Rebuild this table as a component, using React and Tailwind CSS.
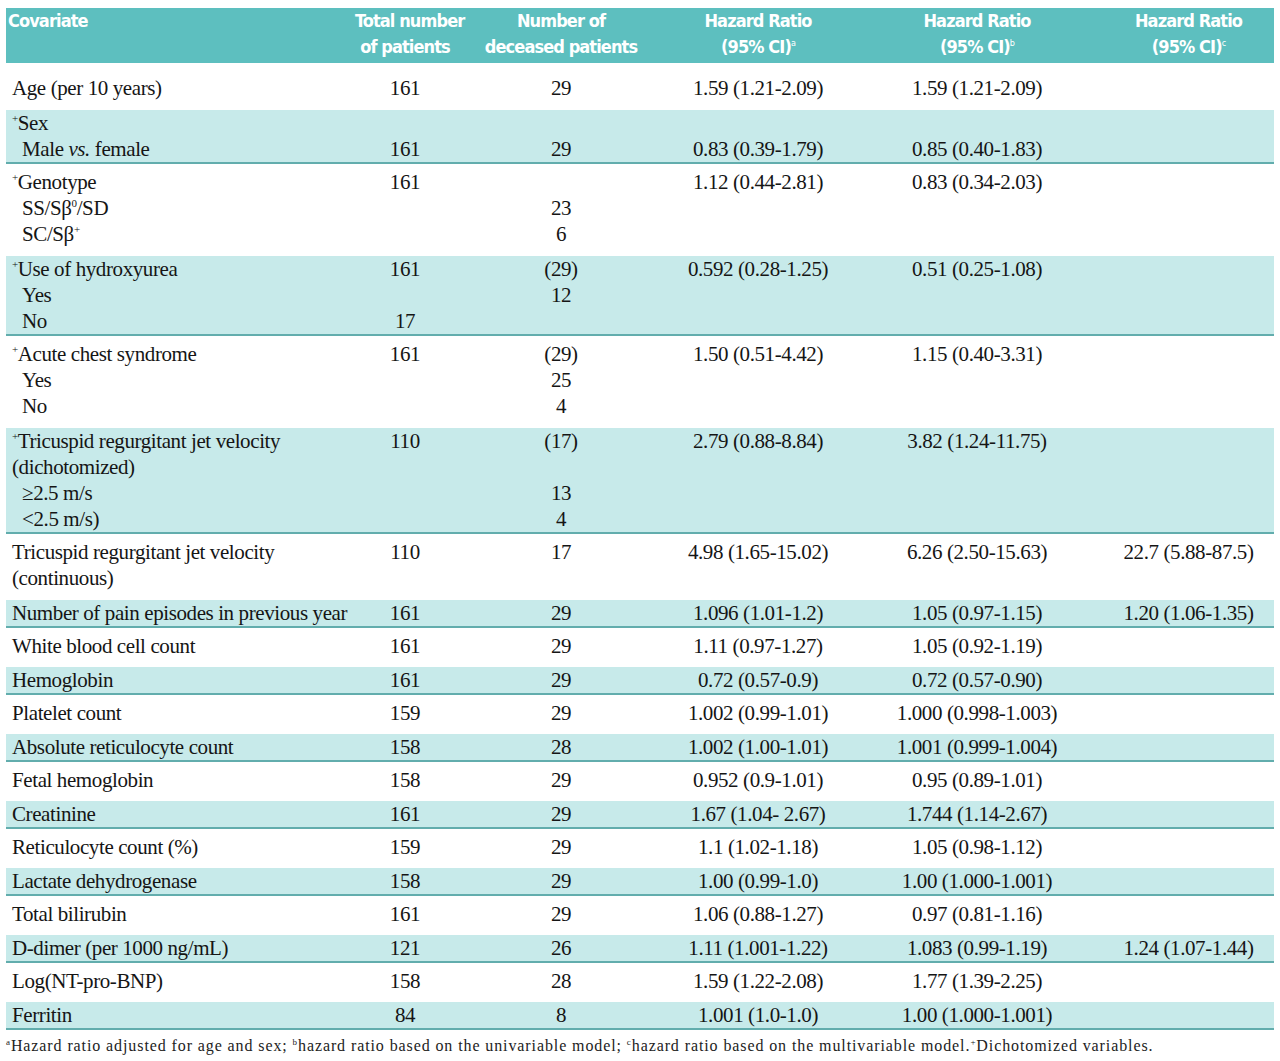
import React from 'react'

const cols = 'grid grid-cols-[349px_100px_212px_182px_256px_167px]'

const Plus = () => <span className="align-super text-[11px] leading-none">+</span>
const Ind = ({ children }) => <span className="pl-[10px]">{children}</span>

const rows = [
  { band: false, top: true, lines: [['Age (per 10 years)', '161', '29', '1.59 (1.21-2.09)', '1.59 (1.21-2.09)', '']] },
  {
    band: true,
    lines: [
      [<><Plus />Sex</>, '', '', '', '', ''],
      [<Ind>Male <i>vs.</i> female</Ind>, '161', '29', '0.83 (0.39-1.79)', '0.85 (0.40-1.83)', ''],
    ],
  },
  {
    band: false,
    lines: [
      [<><Plus />Genotype</>, '161', '', '1.12 (0.44-2.81)', '0.83 (0.34-2.03)', ''],
      [<Ind>SS/Sβ<span className="align-super text-[11px] leading-none">0</span>/SD</Ind>, '', '23', '', '', ''],
      [<Ind>SC/Sβ<span className="align-super text-[11px] leading-none">+</span></Ind>, '', '6', '', '', ''],
    ],
  },
  {
    band: true,
    lines: [
      [<><Plus />Use of hydroxyurea</>, '161', '(29)', '0.592 (0.28-1.25)', '0.51 (0.25-1.08)', ''],
      [<Ind>Yes</Ind>, '', '12', '', '', ''],
      [<Ind>No</Ind>, '17', '', '', '', ''],
    ],
  },
  {
    band: false,
    lines: [
      [<><Plus />Acute chest syndrome</>, '161', '(29)', '1.50 (0.51-4.42)', '1.15 (0.40-3.31)', ''],
      [<Ind>Yes</Ind>, '', '25', '', '', ''],
      [<Ind>No</Ind>, '', '4', '', '', ''],
    ],
  },
  {
    band: true,
    lines: [
      [<><Plus />Tricuspid regurgitant jet velocity</>, '110', '(17)', '2.79 (0.88-8.84)', '3.82 (1.24-11.75)', ''],
      ['(dichotomized)', '', '', '', '', ''],
      [<Ind>≥2.5 m/s</Ind>, '', '13', '', '', ''],
      [<Ind>&lt;2.5 m/s)</Ind>, '', '4', '', '', ''],
    ],
  },
  {
    band: false,
    lines: [
      ['Tricuspid regurgitant jet velocity', '110', '17', '4.98 (1.65-15.02)', '6.26 (2.50-15.63)', '22.7 (5.88-87.5)'],
      ['(continuous)', '', '', '', '', ''],
    ],
  },
  { band: true, lines: [['Number of pain episodes in previous year', '161', '29', '1.096 (1.01-1.2)', '1.05 (0.97-1.15)', '1.20 (1.06-1.35)']] },
  { band: false, lines: [['White blood cell count', '161', '29', '1.11 (0.97-1.27)', '1.05 (0.92-1.19)', '']] },
  { band: true, lines: [['Hemoglobin', '161', '29', '0.72 (0.57-0.9)', '0.72 (0.57-0.90)', '']] },
  { band: false, lines: [['Platelet count', '159', '29', '1.002 (0.99-1.01)', '1.000 (0.998-1.003)', '']] },
  { band: true, lines: [['Absolute reticulocyte count', '158', '28', '1.002 (1.00-1.01)', '1.001 (0.999-1.004)', '']] },
  { band: false, lines: [['Fetal hemoglobin', '158', '29', '0.952 (0.9-1.01)', '0.95 (0.89-1.01)', '']] },
  { band: true, lines: [['Creatinine', '161', '29', '1.67 (1.04- 2.67)', '1.744 (1.14-2.67)', '']] },
  { band: false, lines: [['Reticulocyte count (%)', '159', '29', '1.1 (1.02-1.18)', '1.05 (0.98-1.12)', '']] },
  { band: true, lines: [['Lactate dehydrogenase', '158', '29', '1.00 (0.99-1.0)', '1.00 (1.000-1.001)', '']] },
  { band: false, lines: [['Total bilirubin', '161', '29', '1.06 (0.88-1.27)', '0.97 (0.81-1.16)', '']] },
  { band: true, lines: [['D-dimer (per 1000 ng/mL)', '121', '26', '1.11 (1.001-1.22)', '1.083 (0.99-1.19)', '1.24 (1.07-1.44)']] },
  { band: false, lines: [['Log(NT-pro-BNP)', '158', '28', '1.59 (1.22-2.08)', '1.77 (1.39-2.25)', '']] },
  { band: true, lines: [['Ferritin', '84', '8', '1.001 (1.0-1.0)', '1.00 (1.000-1.001)', '']] },
]

const headers = [
  ['Covariate', ''],
  ['Total number', 'of patients'],
  ['Number of', 'deceased patients'],
  ['Hazard Ratio', '(95% CI)', 'a'],
  ['Hazard Ratio', '(95% CI)', 'b'],
  ['Hazard Ratio', '(95% CI)', 'c'],
]

function Row({ r }) {
  let pad
  if (r.band) pad = 'bg-[#c7eaea] border-b-2 border-[#62adad]'
  else if (r.top) pad = 'pt-[12px] pb-[9px]'
  else if (r.lines.length > 1) pad = 'pt-[5px] pb-[9px]'
  else pad = 'pt-[5px] pb-[8px]'
  return (
    <div className={pad}>
      <div className={`${cols} leading-[26px]`}>
        {r.lines.map((line, i) =>
          line.map((c, j) => (
            <div
              key={i + '-' + j}
              className={j === 0 ? 'pl-[6px] whitespace-nowrap' : 'text-center whitespace-nowrap'}
            >
              {c}
            </div>
          ))
        )}
      </div>
    </div>
  )
}

export default function App() {
  return (
    <div className="bg-white w-[1280px] h-[1061px] overflow-hidden px-[6px] pt-[8px] text-[#151515] font-['Liberation_Serif',serif] text-[21px] tracking-[-0.4px]">
      {/* header band */}
      <div className={`${cols} bg-[#5dbfbf] pb-[3px] text-white font-bold font-['DejaVu_Sans',sans-serif] font-stretch-condensed text-[18px] leading-[26px] tracking-[-0.9px] whitespace-nowrap`}>
        {headers.map((h, i) => (
          <div key={i} className={i === 0 ? 'pl-[2px]' : 'text-center'}>
            <div>{h[0]}</div>
            <div>
              {h[1]}
              {h[2] && <span className="align-super text-[9px] leading-none font-normal">{h[2]}</span>}
            </div>
          </div>
        ))}
      </div>

      {rows.map((r, i) => (
        <Row key={i} r={r} />
      ))}

      <div className="mt-[5px] text-[16px] leading-[22px] tracking-[0.9px] text-[#222] whitespace-nowrap">
        <span className="align-super text-[9px] leading-none">a</span>Hazard ratio adjusted for age and sex;{' '}
        <span className="align-super text-[9px] leading-none">b</span>hazard ratio based on the univariable model;{' '}
        <span className="align-super text-[9px] leading-none">c</span>hazard ratio based on the multivariable model.
        <span className="align-super text-[9px] leading-none">+</span>Dichotomized variables.
      </div>
    </div>
  )
}
